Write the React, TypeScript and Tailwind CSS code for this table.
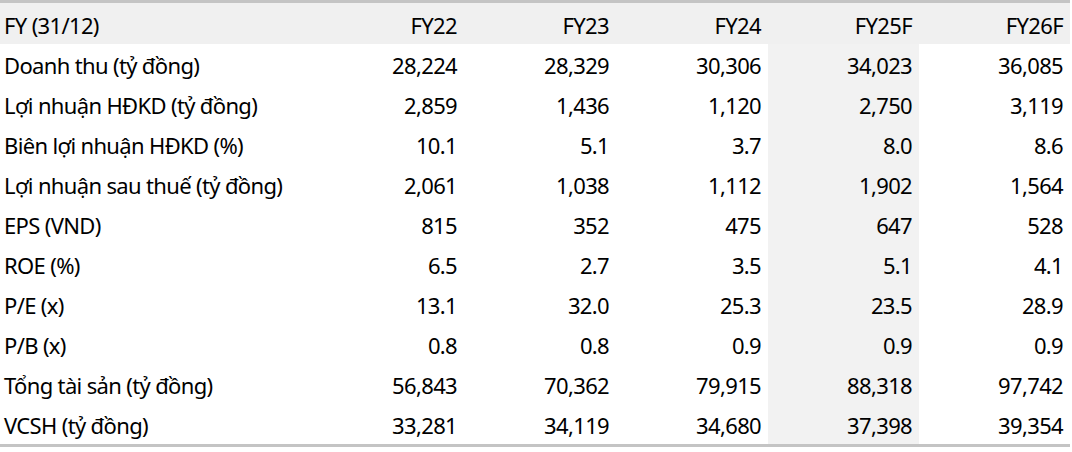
import React from 'react';

const rows: [string, string[]][] = [
  ['Doanh thu (tỷ đồng)', ['28,224', '28,329', '30,306', '34,023', '36,085']],
  ['Lợi nhuận HĐKD (tỷ đồng)', ['2,859', '1,436', '1,120', '2,750', '3,119']],
  ['Biên lợi nhuận HĐKD (%)', ['10.1', '5.1', '3.7', '8.0', '8.6']],
  ['Lợi nhuận sau thuế (tỷ đồng)', ['2,061', '1,038', '1,112', '1,902', '1,564']],
  ['EPS (VND)', ['815', '352', '475', '647', '528']],
  ['ROE (%)', ['6.5', '2.7', '3.5', '5.1', '4.1']],
  ['P/E (x)', ['13.1', '32.0', '25.3', '23.5', '28.9']],
  ['P/B (x)', ['0.8', '0.8', '0.9', '0.9', '0.9']],
  ['Tổng tài sản (tỷ đồng)', ['56,843', '70,362', '79,915', '88,318', '97,742']],
  ['VCSH (tỷ đồng)', ['33,281', '34,119', '34,680', '37,398', '39,354']],
];

const years = ['FY22', 'FY23', 'FY24', 'FY25F', 'FY26F'];

const cols = 'grid grid-cols-[313px_151px_152px_152px_151px_151px]';

export default function App() {
  return (
    <div className="w-[1072px] h-[452px] bg-white font-['Noto_Sans',sans-serif] text-[22px] tracking-[-0.65px] text-black">
      <div className="w-[1070px] border-t-[3px] border-b-[3px] border-[#c4c4c4]">
        {/* Header */}
        <div className={`${cols} h-[41px] items-center bg-[#f0f0f0] pt-[3px]`}>
          <div className="pl-[4px]">FY (31/12)</div>
          {years.map((y) => (
            <div key={y} className="text-right pr-[7px]">{y}</div>
          ))}
        </div>

        {/* Body */}
        {rows.map(([label, vals]) => (
          <div key={label} className={`${cols} h-[40px]`}>
            <div className="pl-[4px] pt-[3px] flex items-center">{label}</div>
            {vals.map((v, i) => (
              <div
                key={i}
                className={`flex items-center justify-end pr-[7px] pt-[3px] ${i === 3 ? 'bg-[#f2f2f2]' : ''}`}
              >
                {v}
              </div>
            ))}
          </div>
        ))}
      </div>
    </div>
  );
}
